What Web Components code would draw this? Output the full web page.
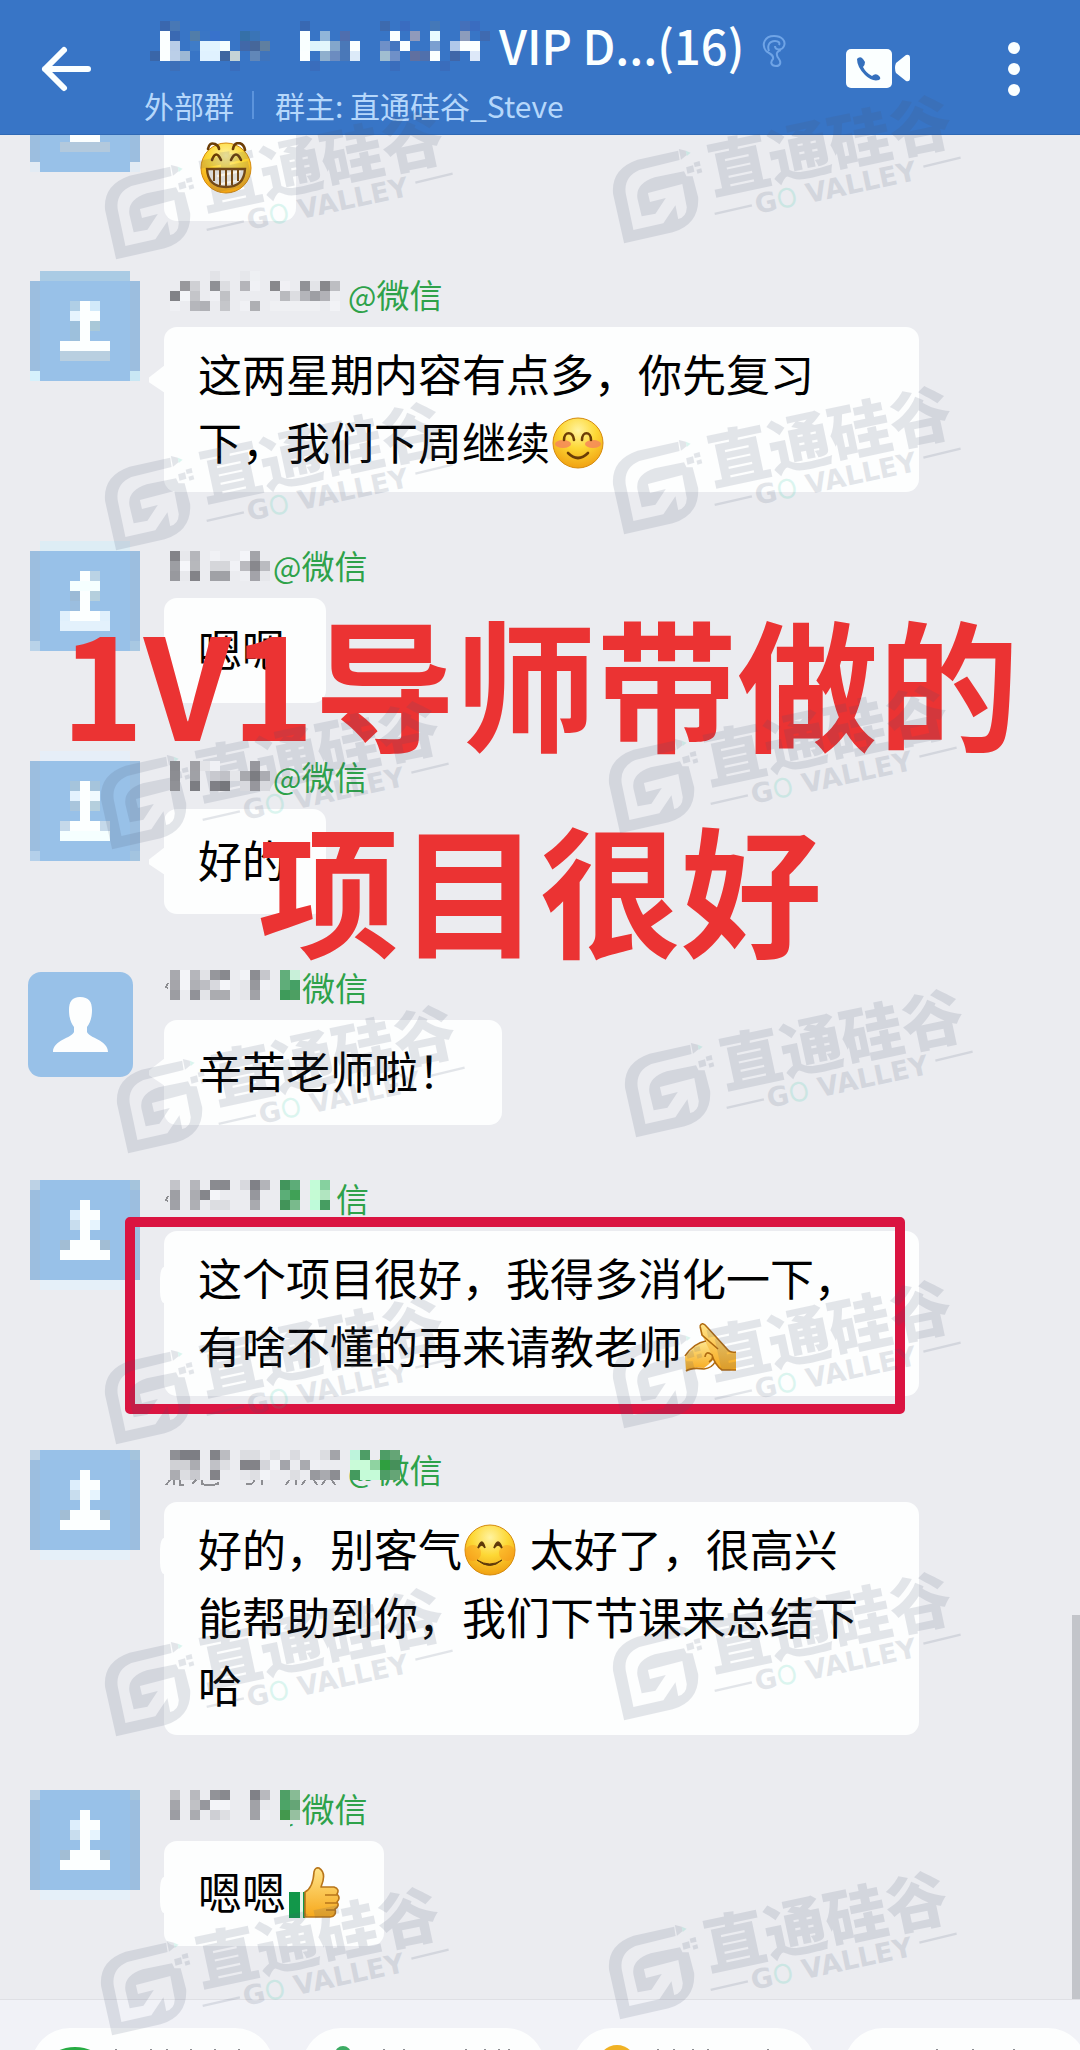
<!DOCTYPE html>
<html lang="zh-CN">
<head>
<meta charset="utf-8">
<meta name="viewport" content="width=device-width, initial-scale=1">
<title>VIP D...(16)</title>
<style>
  body { margin: 0; background: #ebecf0; font-family: "Noto Sans CJK SC", "Noto Sans", sans-serif; }
</style>
</head>
<body>
<chat-app></chat-app>

<template id="t-app">
  <style>
    :host { display: block; position: relative; overflow: hidden; }
    main { position: relative; overflow: hidden; box-sizing: border-box; background: #ebecf0; padding: 0 161px 53px 28px; }
    .list { display: flex; flex-direction: column; gap: 58px; margin-top: -67px; }
    .scrollbar { position: absolute; right: 0; bottom: 0; width: 8px; height: 384px; background: #c3c5ca; }
    .sheet { position: absolute; inset: 0; pointer-events: none; overflow: hidden; }
    chat-caption { position: absolute; left: 0; right: 0; top: 577px; }
    go-watermark { position: absolute; left: var(--x); top: var(--y); }
  </style>
  <chat-header></chat-header>
  <main>
    <div class="list">
      <chat-message avatar="z" oy="-6"><chat-emoji kind="grin"></chat-emoji></chat-message>

      <chat-message avatar="a" oy="-8" name-width="184" wide tail="long"
        cells="4:E2E3E7 7:E6E7EB 8:EEF0F3/1:98989C 2:CFD0D4 4:8F9095 5:DCDDE1 7:B4B4B9 8:F0F1F5 10:88888C 11:F0F0F4 13:919297 14:E3E4E8 15:88888C 16:BDBEC2/0:818287 1:F3F5F8 2:C4C5C9 4:F0F1F5 5:C0C1C5 11:B9BABE 12:DCDDE1 13:B4B5BA 14:9E9FA4 15:B2B2B7 16:EEEFF2/0:EFF0F4 2:B5B6BB 3:B0B1B6 5:C5C6CA 7:F0F1F5 8:AEAFB3 10-14:EFF0F3 16:F2F3F6">
        <span slot="name"><small>@</small>微信</span>这两星期内容有点多，你先复习<br>下，我们下周继续<chat-emoji kind="blush"></chat-emoji></chat-message>

      <chat-message avatar="b" oy="1" avatar-oy="-9" name-width="109"
        cells="0:838388 1:E7E8EC 2:B5B6BB 4:F0F1F5 7:F4F5F9 8:A3A4A9/0:9D9EA3 1:F5F6FA 2:B7B8BC 4-5:D5D6DA 6:F1F2F6 7:BABABF 8:88888D 9:BABBC0/0:98999E 1:E8E9ED 2:838388 4-5:A0A1A6 7:EEEFF3 8:A3A3A9 9:E6E7EB">
        <span slot="name"><small>@</small>微信</span>嗯嗯</chat-message>

      <chat-message avatar="c" oy="0" avatar-oy="-10" name-width="109" tail="long"
        cells="0:8A8B90 2:A0A0A5 3:E3E4E8 4:F0F1F5 8:97979D/0:8C8D92 2:A0A1A6 4:C8C9CF 5:C0C1C7 6:E5E6EA 7:A8A9AE 8:7C7D82 9:ABACB2/0:909196 2:7C7D82 4:808086 5:76777C 7:D8D9DE 8:97979D 9:D8D9DE">
        <span slot="name"><small>@</small>微信</span>好的</chat-message>

      <chat-message avatar="person" oy="-2" name-width="138" tail="long" marks="M4 16l-2 -1 2 -4"
        cells="0:A8A9AE 1:F3F4F8 2:B5B6BB 3:E2E3E7 4:96979C 5:88898E 7:F2F3F7 8:8C8D92 9:C6C7CC 11:62AE7B 12:C8F0D9/0:A5A5AA 1:F3F4F8 2:AFB0B5 3:BDBEC3 4:D8D9DE 5:F4F5F9 7:E5E6EA 8:97989D 9:F0F1F5 11:5FAD79 12:45A065/0:9C9DA2 2:919298 3:E3E4E8 4-5:ABACB0 7:E5E6EA 8:A1A2A7 11:3E9B5A 12:4D9F62">
        <span slot="name">微信</span>辛苦老师啦！</chat-message>

      <chat-message avatar="d" oy="-3" name-width="172" wide tail="short" framed marks="M4 18l-2 -1 2 -4"
        cells="0:C3C4C9 2:B5B6BB 4:8A8B90 5:88898E 7:D8D9DE 8:808187 9:B3B4B9 11:42955C 12:5DAC78 14:C3FCD8 15:86D19F/0:9E9FA4 2:ABACB1 3:85868B 4:F4F5F9 8:96979D 11:5BAE77 12:40A156 14:C5FBD4 15:B1E5C0/0:A0A1A7 2:AEAFB4 4-5:DCDDE1 8:A9AAAF 11:429459 12:79BA8C 14:BFFBDA 15:469D61">
        <span slot="name">信</span>这个项目很好，我得多消化一下，<br>有啥不懂的再来请教老师<chat-emoji kind="salute"></chat-emoji></chat-message>

      <chat-message avatar="d" oy="-4" name-width="184" wide tail="short"
        marks="M2 31l4 -5M10 26v5M16 26v5h4M28 30l4 -4M38 26v4q6 2 16 0v-2M90 26q0 5 -8 4M98 26v5M122 31l3 -5M132 26v5M138 31l3 -5M150 26l3 5M158 31l3 -5M168 26l3 5"
        cells="0:8F9095 1-2:7D7E84 4:828388 5:BBBCC1 7-8:DCDDE1 10:E0E1E5 12:DADBE0 15:DCDDE1 16:A3A4A9 18:BDF4DC 19:4E9D66 21:4E9D66 22:65A576/0-1:D0D1D5 2:ABACB1 4:C0C1C6 5:DEDFE3 7-8:838388 9:D4D5DA 10:F2F3F7 11:A3A4AA 13:A9AAAF 14:EEEFF3 18-19:C9FBD8 20:8FD3A1 21:2F9F3F 22:46905A/0:ABACB1 1:DCDDE1 2:C8C9CE 4:838388 7:E6E7EB 8:DEDFE3 9:F2F3F7 12:DDDEE2 14:98999E 15:A9AAAF 16:8C8D92 18:449A5E 19-20:C5FBD8 21:4E9D66 22:65A576">
        <span slot="name"><small>@</small>微信</span>好的，别客气<chat-emoji kind="smile"></chat-emoji> 太好了，很高兴<br>能帮助到你，我们下节课来总结下<br>哈</chat-message>

      <chat-message avatar="d" oy="-3" name-width="109" tail="short"
        cells="0:C0C1C5 2:B8B9BE 4:929398 5:88898E 8:808187 9:B8B9BE 10:EBECF0 11:4F9F66 12:88BB95/0:A4A5AA 2:C0C1C5 3:96979D 4-5:F3F4F8 8:A1A2A7 9:E8E9ED 10:EBECF0 11:4DA467 12:65A576/0:9C9DA3 2:AAABB0 4:CECFD4 5:DEDFE3 8:A1A2A7 9:EFF0F4 10:EBECF0 11:43984D 12:96C0A0/10-11:EBECF0">
        <span slot="name"><small>@</small>微信</span>嗯嗯<chat-emoji kind="thumb"></chat-emoji></chat-message>
    </div>
    <div class="scrollbar"></div>
  </main>
  <quick-bar></quick-bar>
  <chat-caption>1V1导师带做的<br>项目很好</chat-caption>
  <div class="sheet"></div>
</template>

<template id="t-header">
  <style>
    :host { display: block; }
    header { display: flex; align-items: flex-start; box-sizing: border-box; height: 135px; background: #3875c6; border-bottom: 1px solid #2f69b5; color: #fbffff; }
    button { border: 0; padding: 0; background: none; color: inherit; display: block; }
    svg { display: block; }
    .back { margin: 44px 0 0 38px; }
    .titles { margin-left: 50px; flex: 1; min-width: 0; }
    h1 { display: flex; align-items: center; margin: 0; padding-top: 10px; height: 70px; font-size: 47px; line-height: 70px; font-weight: 500; white-space: nowrap; }
    .ear { margin: 12px 0 0 18px; }
    .sub { display: flex; align-items: center; margin: 5px 0 0; font-size: 30px; line-height: 40px; color: #b5d7fb; white-space: nowrap; }
    .sub i { width: 2px; height: 28px; margin: 0 21px 0 18px; background: #5c94dc; }
    .video { margin: 45px 0 0; }
    .more { margin: 41px 60px 0 97px; }
  </style>
  <header>
    <button class="back" aria-label="返回"><svg width="56" height="50" fill="none" stroke="currentColor" stroke-width="6" stroke-linecap="round" stroke-linejoin="round"><path d="M26 6L7 25L26 44M7 25H50"/></svg></button>
    <div class="titles">
      <h1><pixel-mosaic w="355" h="70" ox="6" oy="11" cells="1:3A67AE 2:4878B5 15:3868B2 23:3D6AAE 25:3A6CC0 28:4478B8 31:4470BA 32:3A6CC0/1:FBFFFF 2:3A69B2 4:517DA9 5:3A76C5 6:3872CC 9:3570A8 10:3A74B6 15:F9FFFF 17:91B6D9 19:4F6EAE 24:FAFFFF 26:909ABB 28:E8FBFF 31:8C9CBC 33:3F6AB0/1:FBFFFF 2:B9CDE8 4:3F7CC8 5-6:E2F4FF 7:F5FFFF 9:4168A8 10:46679A 11:5F7FA0 15:F9FFFF 16:DDF4FC 17:E3F7FC 18:83A6CB 19:4A78B8 20:FBFFFF 23:6F90C8 24:4576C0 25:FAFFFF 28:7B9FD0 30:B0C8EA 31-32:FBFFFF/0:3A66A8 1:FBFFFF 2:BBCFE8 3:9DB8D4 5-6:E0F2FF 7:3E66A0 8:C5D3D6 10:6187B8 11:3F74BC 15:FBFFFF 17:8FAFCD 18:6C8CC0 19:4A78B8 20:DCEAF8 23:A0BED0 24:6F90C8 26:6070A0 27:5070AC 28:FBFFFF 30:4066A8 32:DDE8F8/2:3D6FB8 8:3A6DBC 16:3A6DBC 24:3A6DBC 29:3A6DBC"></pixel-mosaic><span>VIP D...(16)</span><svg class="ear" width="24" height="34" viewBox="0 0 24 34" fill="none" stroke="#6fa4e6" stroke-width="2"><path d="M4 17C-1 10 3 2 12 2C20 2 24 7 22 12C20 17 13 16 13 12M7 17C5 12 7 7 13 7C17 7 18 9 17 11M4 17C8 20 12 21 11 25C8 28 9 32 14 32C19 32 19 28 17 25C13 20 15 17 19 16"/></svg></h1>
      <div class="sub"><span>外部群</span><i></i><span>群主: 直通硅谷_Steve</span></div>
    </div>
    <button class="video" aria-label="视频通话"><svg width="66" height="48" viewBox="0 0 66 48"><rect x="1" y="4" width="46" height="39" rx="5" fill="currentColor"/><path d="M51 18L61 10Q65 9 65 13V33Q65 37 61 36L51 28Q49 23 51 18Z" fill="currentColor"/><path d="M13 13Q16 11 18 14L20 17Q20 20 18 22Q21 28 27 31Q30 28 33 30L35 32Q36 34 34 35Q27 37 20 30Q12 22 12 14Z" fill="#3570bd"/></svg></button>
    <button class="more" aria-label="更多"><svg width="12" height="56" fill="currentColor"><circle cx="6" cy="7" r="6"/><circle cx="6" cy="28" r="6"/><circle cx="6" cy="49" r="6"/></svg></button>
  </header>
</template>

<template id="t-message">
  <style>
    :host { display: flex; align-items: flex-start; }
    .avatar { width: 136px; flex: none; }
    .body { flex: 1; min-width: 0; display: flex; flex-direction: column; align-items: flex-start; }
    .name { display: flex; align-items: flex-start; height: 48px; font-size: 33px; line-height: 30px; color: #2ea24a; white-space: nowrap; }
    .name pixel-mosaic { position: relative; z-index: 1; flex: none; }
    ::slotted(span) { display: block; }
    .bubble { position: relative; box-sizing: border-box; min-height: 105px; display: flex; align-items: center; padding: 12px 40px 17px 34px; border-radius: 13px; background: #fdfefe; color: #000; font-size: 44px; line-height: 68px; }
    :host([wide]) .bubble { width: 100%; }
    :host([tail="long"]) .bubble::before { content: ""; position: absolute; left: -15px; top: 38px; width: 16px; height: 28px; background: #fdfefe; clip-path: polygon(0 45%, 100% 0, 100% 100%, 0 62%); }
    :host([tail="short"]) .bubble::before { content: ""; position: absolute; left: -4px; top: 36px; width: 8px; height: 36px; border-radius: 4px / 12px; background: #fdfefe; }
    :host([framed]) .bubble::after { content: ""; position: absolute; inset: -14px 14px -18px -39px; border: 10px solid #da1441; border-radius: 5px; }
  </style>
  <div class="avatar"></div>
  <div class="body">
    <div class="name"><pixel-mosaic></pixel-mosaic><slot name="name"></slot></div>
    <div class="bubble"><div><slot></slot></div></div>
  </div>
</template>

<template id="t-quick">
  <style>
    :host { display: block; height: 51px; box-sizing: border-box; overflow: hidden; background: #f1f2f7; border-top: 1px solid #dfe0e5; }
    nav { display: flex; gap: 28px; padding: 28px 0 0 31px; }
    button { flex: none; display: flex; width: 243px; height: 78px; border: 0; padding: 19px 0 0 26px; border-radius: 39px; background: #fdfefe; color: #8d8e92; }
    svg { display: block; overflow: visible; }
  </style>
  <nav>
    <button aria-label="快捷功能一"><svg width="190" height="40"><ellipse cx="18" cy="13" rx="24" ry="13" fill="#27ab42"/><path d="M59 2v2M94 2v2M110 2v2M134 2v2M158 2v2M182 2v2" stroke="currentColor" stroke-width="2"/></svg></button>
    <button aria-label="快捷功能二"><svg width="190" height="40"><circle cx="15" cy="7" r="8" fill="#3cab63"/><path d="M56 2v2M76 2v2M138 2v2M157 2v2M171 2v2M181 2v2" stroke="currentColor" stroke-width="2"/></svg></button>
    <button aria-label="快捷功能三"><svg width="190" height="40"><circle cx="18" cy="17" r="19" fill="#f0b224"/><path d="M59 2v2M75 2v2M94 2v2M109 2v2M169 2v2" stroke="currentColor" stroke-width="2"/></svg></button>
    <button aria-label="快捷功能四"><svg width="190" height="40"><path d="M67 2v2M103 2v2M144 2v2" stroke="currentColor" stroke-width="2"/></svg></button>
  </nav>
</template>

<template id="t-watermark">
  <style>
    :host { display: block; width: 356px; height: 154px; }
    svg { display: block; overflow: visible; opacity: .14; }
    .cn { font: 900 62px "Noto Sans CJK SC", sans-serif; }
    .en { font: 700 27px "DejaVu Sans", sans-serif; }
    .o { font-family: Inter, sans-serif; font-weight: 400; fill: #12c39c; }
  </style>
  <svg width="356" height="154" fill="#485472">
    <g transform="scale(.3444 .3333) translate(-190 -330)">
      <path d="M388 500L270 527Q192 555 199 630L231 778L372 745Q450 720 446 640L430 577L412 577L405 562L320 580Q262 600 270 645L282 697L322 689L352 642L306 654L300 627L400 600L413 670Q412 700 388 705L380 664L345 718L258 738L236 630Q228 580 275 558L392 528Z"/>
      <path d="M390 495L410 500L413 513L396 527Z"/><path d="M410 500L424 506L413 516Z" fill="#12c39c"/>
      <path d="M411 550L431 544L435 563L415 569ZM433 536L450 531L453 545L436 549ZM441 557L455 553L458 565L444 569Z"/>
      <path d="M494 690L602 664M1100 548L1208 521" stroke="#485472" stroke-width="7"/>
    </g>
    <text class="cn" transform="translate(103 100) rotate(-12)">直通硅谷</text>
    <text class="en" transform="translate(147 120) rotate(-12)">G<tspan class="o">O</tspan> VALLEY</text>
  </svg>
</template>

<script>
  const tpl = id => document.getElementById(id).content.cloneNode(true);

  class Base extends HTMLElement {
    constructor() { super(); this.attachShadow({ mode: "open" }); }
  }

  // "col:HEX" or "from-to:HEX" cells separated by spaces, rows separated by "/"
  function cellRects(spec, ox, oy) {
    return spec.split("/").map((row, r) => row.trim().split(/\s+/).filter(Boolean).map(cell => {
      const [range, hex] = cell.split(":");
      const [a, b] = range.split("-").map(Number);
      const n = (b === undefined ? a : b) - a + 1;
      return `<rect x="${ox + a * 10}" y="${oy + r * 10}" width="${n * 10}" height="10" fill="#${hex}"/>`;
    }).join("")).join("");
  }

  customElements.define("pixel-mosaic", class extends Base {
    connectedCallback() {
      const n = k => Number(this.getAttribute(k) || 0);
      const marks = this.getAttribute("marks");
      this.shadowRoot.innerHTML = `<style>:host{display:block}svg{display:block;overflow:visible}</style>
        <svg width="${n("w")}" height="${n("h")}" shape-rendering="crispEdges">${cellRects(this.getAttribute("cells") || "", n("ox"), n("oy"))}${marks ? `<path d="${marks}" fill="none" stroke="#8d8e92" stroke-width="2"/>` : ""}</svg>`;
    }
  });

  const B = "98C1E8", S = "9CBEDF", W = "FCFFFF";
  const full = `0:${S} 1-9:${B} 10:${S}`;
  const AVATARS = {
    z: ["", full, full, full, full, full, full, `${full} 4-6:${W}`, `${full} 3-7:B2C9DD`, full, `0:E2EBF4 1-9:${B} 10:E2EBF4`],
    a: ["1-9:AACBE4", full, full, `${full} 4:B0CFE6 5:${W} 6:D2EAFA`, `${full} 4:E6F4FE 5-6:${W}`, `${full} 4:9DC0DC 5:${W} 6:A9C8D8`, `${full} 4:9DC0DC 5:${W}`, `${full} 3-7:${W}`, `${full} 3-7:B9CFE0`, full, `0:D5F1FC 1-9:${B} 10:C8E7F4`],
    b: ["1-9:DDEDF5", full, full, `${full} 5:${W} 6:BAD3E5`, `${full} 4-6:F5FFFF`, `${full} 4:9BBAD6 5:${W} 6:B5CFDD`, `${full} 4:9BBEDF 5:${W}`, `${full} 3:E0F0FC 4-6:${W} 7:E0F0FC`, `${full} 3-7:E3F1FC`, full, `0:B9D3E9 1-9:${B} 10:A8C8E2`],
    c: ["1-9:E6EEF8", full, full, `${full} 4:A5C4DC 5:${W} 6:A5C4DC`, `${full} 4:E3F2FE 5:${W} 6:F0FAFF`, `${full} 4:A9C5DC 5:${W} 6:B5CFDD`, `${full} 5:${W}`, `${full} 3:C5D9EA 4-6:${W} 7:C5D9EA`, `${full} 3-7:F5FFFF`, full, `0:B4D0EA 1-9:${B} 10:A3C4E0`],
    d: [`0:BDD2E5 1-9:${B} 10:A5C4DC`, full, `${full} 5:${W}`, `${full} 4:DDEEFC 5-6:${W}`, `${full} 4:C8DDEE 5:${W} 6:E6F4FE`, `${full} 5:${W}`, `${full} 3:A2BDD4 4-6:${W} 7:A2BDD4`, `${full} 3-7:${W}`, full, full, "1-9:E5F0F9"]
  };
  const PERSON = `<svg width="105" height="105" style="display:block"><rect width="105" height="105" rx="13" fill="#98c1e8"/><path d="M52 25C44 25 41 30 41 38C41 46 43 51 46 55V60C44 66 25 68 25 80H80C80 68 61 66 59 60V55C62 51 64 46 64 38C64 30 61 25 52 25Z" fill="#fdfefe"/></svg>`;

  customElements.define("chat-message", class extends Base {
    connectedCallback() {
      const root = this.shadowRoot;
      root.append(tpl("t-message"));
      const get = (k, d) => this.getAttribute(k) ?? d;
      const kind = get("avatar");
      const box = root.querySelector(".avatar");
      if (kind === "person") box.innerHTML = PERSON;
      else {
        const m = document.createElement("pixel-mosaic");
        const attrs = { w: 112, h: 105, ox: 2, oy: get("avatar-oy", get("oy", 0)), cells: AVATARS[kind].join("/") };
        for (const k in attrs) m.setAttribute(k, attrs[k]);
        box.append(m);
      }
      const old = root.querySelector(".name pixel-mosaic");
      const m = document.createElement("pixel-mosaic");
      const attrs = { w: get("name-width", 0), h: 30, ox: 6, oy: get("oy", 0), cells: get("cells", ""), marks: get("marks", "") };
      for (const k in attrs) m.setAttribute(k, attrs[k]);
      old.replaceWith(m);
      for (const s of this.querySelectorAll("small")) s.style.fontSize = "30px";
    }
  });

  const face = `<circle cx="26" cy="26" r="25" fill="url(#g)" stroke="#d58a0c" stroke-width="1"/>`;
  const grad = `<defs><radialGradient id="g" cx=".5" cy=".25" r=".8"><stop offset="0" stop-color="#fff3a0"/><stop offset=".45" stop-color="#fdd835"/><stop offset="1" stop-color="#ef9a0d"/></radialGradient><linearGradient id="h" x1="0" y1="0" x2="0" y2="1"><stop offset="0" stop-color="#ffe48a"/><stop offset="1" stop-color="#f6a81c"/></linearGradient></defs>`;
  const line = `fill="none" stroke="#6b3d06" stroke-width="2.6" stroke-linecap="round"`;
  const EMOJI = {
    grin: `${face}<path d="M8 7Q9 0 15 2Q19 4 19 7M33 7Q34 1 39 1Q44 2 45 8" ${line}/><path d="M12 18Q16 7 21 18M31 18Q36 7 41 18" ${line}/><path d="M7 27H45Q44 45 26 45Q8 45 7 27Z" fill="#f7f3ea" stroke="#7a480b" stroke-width="2.4"/><path d="M14 28V39M20 28V43M26 28V44M32 28V43M38 28V39" stroke="#7a480b" stroke-width="2"/>`,
    blush: `${face}<ellipse cx="11" cy="27" rx="8" ry="4" fill="#f4875a" opacity=".85"/><ellipse cx="41" cy="27" rx="8" ry="4" fill="#f4875a" opacity=".85"/><path d="M12 23C12 14 21 14 22 23M30 23C30 14 39 14 39 23" ${line}/><path d="M16 36Q26 46 36 36" ${line}/>`,
    smile: `${face}<circle cx="9" cy="29" r="8" fill="#f88a1a" opacity=".4"/><circle cx="43" cy="29" r="8" fill="#f88a1a" opacity=".4"/><path d="M14 24Q18 12 21 24Q18 18 14 24ZM30 24Q34 12 38 24Q34 18 30 24Z" fill="#5f3a0a" stroke="#5f3a0a" stroke-width="1.6"/><path d="M13 36Q26 44 38 36Q26 47 13 36Z" fill="#5f3a0a" stroke="#5f3a0a"/>`,
    salute: `<path d="M1 36Q8 28 13 24Q22 19 30 22L34 34L24 44L20 47Q10 45 2 50Z" fill="url(#h)"/><path d="M16 5Q18 0 23 6L43 28Q46 32 52 31V49H38Q30 42 28 34L18 14Z" fill="url(#h)"/><path d="M1 35Q10 22 22 20M16 5Q18 0 23 6L43 28Q46 32 52 31M16 5L18 14L34 28M28 34Q31 44 38 49H52M2 50Q8 46 20 48Q28 47 31 41M21 36Q22 29 28 34Q30 38 25 41" fill="none" stroke="#b06a10" stroke-width="1.6"/>`,
    thumb: `<path d="M1 25H17V51H1Z" fill="#12974a"/><path d="M12 25H15V51H12Z" fill="#e8f5ea"/><path d="M17 25Q25 21 26 5Q27 0 31 1Q39 6 33 20H46Q52 22 49 27Q53 31 49 35Q52 39 47 42Q49 49 42 50H17Z" fill="url(#h)" stroke="#b8751a" stroke-width="1.6" stroke-linejoin="round"/><path d="M37 28H49M37 36H49M38 43H47" stroke="#b8751a" stroke-width="1.6"/>`
  };
  customElements.define("chat-emoji", class extends Base {
    connectedCallback() {
      this.shadowRoot.innerHTML = `<style>:host{display:inline-block;width:58px;height:52px;line-height:0;vertical-align:-9px}svg{display:block;margin-left:2px}</style><svg width="53" height="52">${grad}${EMOJI[this.getAttribute("kind")]}</svg>`;
    }
  });

  customElements.define("chat-header", class extends Base {
    connectedCallback() { this.shadowRoot.append(tpl("t-header")); }
  });
  customElements.define("quick-bar", class extends Base {
    connectedCallback() { this.shadowRoot.append(tpl("t-quick")); }
  });
  customElements.define("go-watermark", class extends Base {
    connectedCallback() { this.shadowRoot.append(tpl("t-watermark")); }
  });
  customElements.define("chat-caption", class extends Base {
    connectedCallback() {
      this.shadowRoot.innerHTML = `<style>:host{display:block;text-align:center;font-size:141px;line-height:206px;font-weight:700;color:#eb3333;pointer-events:none}</style><slot></slot>`;
    }
  });

  // Brand marks scattered over the conversation, two per band
  const MARKS = [[610, 94], [610, 385], [606, 684], [622, 988], [610, 1279], [610, 1571], [606, 1870]];
  customElements.define("chat-app", class extends Base {
    connectedCallback() {
      this.shadowRoot.append(tpl("t-app"));
      const sheet = this.shadowRoot.querySelector(".sheet");
      for (const [x, y] of MARKS) for (const [px, py] of [[x - 508, y + 16], [x, y]]) {
        const mark = document.createElement("go-watermark");
        mark.style.setProperty("--x", px + "px");
        mark.style.setProperty("--y", py + "px");
        sheet.append(mark);
      }
    }
  });
</script>
</body>
</html>
